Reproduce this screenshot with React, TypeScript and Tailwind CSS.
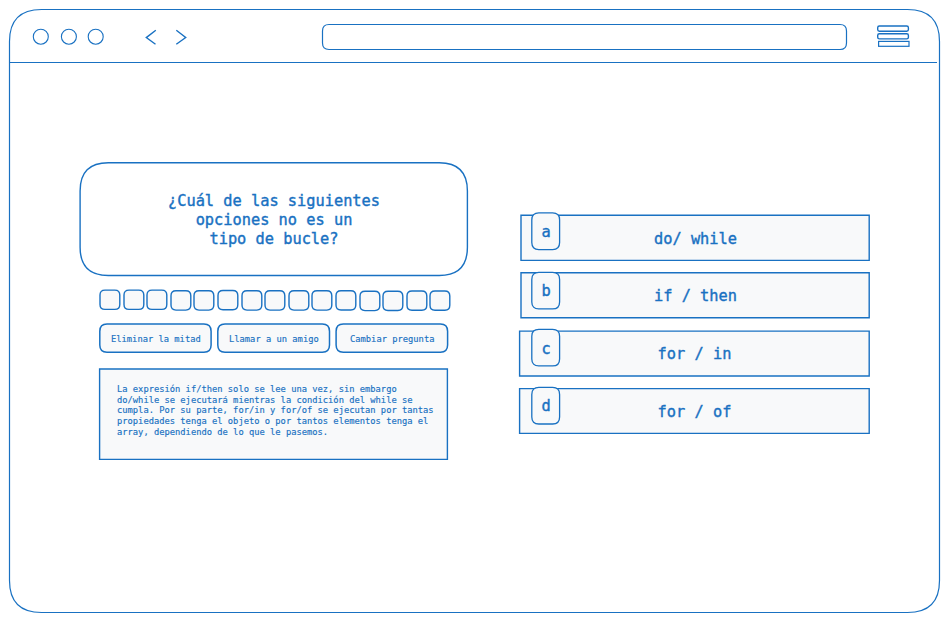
const INK = '#1971c2';

type OutlineProps = {
  x?: number;
  y?: number;
  w: number;
  h: number;
  r?: number;
  stroke?: number;
  fill?: string;
};

// Outline with quadratic corners; its coordinates are local to the box it decorates.
function Outline({ x = 0, y = 0, w, h, r = 0, stroke = 1.4, fill = 'none' }: OutlineProps) {
  const d = r
    ? `M${x + r} ${y}H${x + w - r}Q${x + w} ${y} ${x + w} ${y + r}V${y + h - r}Q${x + w} ${y + h} ${x + w - r} ${y + h}H${x + r}Q${x} ${y + h} ${x} ${y + h - r}V${y + r}Q${x} ${y} ${x + r} ${y}Z`
    : `M${x} ${y}h${w}v${h}h${-w}Z`;
  return (
    <svg className="pointer-events-none absolute inset-0 h-full w-full overflow-visible" aria-hidden="true">
      <path d={d} fill={fill} stroke={INK} strokeWidth={stroke} />
    </svg>
  );
}

const PAPER = '#f8f9fa';

const squares = [0, 0, 0, 0.7, 0.7, 0.4, 0.7, 0.7, 0.7, 0.7, 0.6, 1.2, 1.1, 0.9, 0.9];

const lifelines = [
  { label: 'Eliminar la mitad', x: 0.8, w: 111.3, pad: 'pl-[12px]' },
  { label: 'Llamar a un amigo', x: 0.8, w: 111.7, pad: 'pl-[12px]' },
  { label: 'Cambiar pregunta', x: 1.1, w: 111.5, pad: 'pl-[15px]' },
];

const options = [
  { key: 'a', text: 'do/ while', x: 1, y: 0.2, w: 348.2, h: 45.2, by: -2.1, bh: 36.7, pos: 'pt-[15px] pl-[1px]', ky: 'pt-[8px]' },
  { key: 'b', text: 'if / then', x: 1, y: -0.2, w: 348.2, h: 44.9, by: -0.6, bh: 36.5, pos: 'pt-[14px] pl-[1px]', ky: 'pt-[9px]' },
  { key: 'c', text: 'for / in', x: -0.4, y: 0.1, w: 349.6, h: 44.9, by: -1.7, bh: 36.6, pos: 'pt-[14px] pr-[1px]', ky: 'pt-[9px]' },
  { key: 'd', text: 'for / of', x: -0.4, y: -0.4, w: 349.6, h: 44.8, by: -1.6, bh: 36.6, pos: 'pt-[14px] pr-[1px]', ky: 'pt-[8px]' },
];

function BrowserBar() {
  return (
    <header className="relative flex h-[63px] items-start">
      <svg className="ml-[30px] mt-[26px] h-[22px] w-[160px]" viewBox="30 26 160 22" fill="none" stroke={INK} strokeWidth="1.1">
        <circle cx="40.8" cy="36.7" r="7.5" />
        <circle cx="68.9" cy="36.7" r="7.5" />
        <circle cx="95.7" cy="36.7" r="7.5" />
        <path d="M155.8 30.3 146.3 37.6l9.2 6.7M176.3 30.3l9.4 7.2-9.4 6.8" strokeWidth="1.4" />
      </svg>
      <div className="relative ml-[132px] mt-[24px] h-[26px] w-[525px]">
        <Outline x={0.5} y={0.5} w={524} h={25} r={6.5} stroke={1.2} />
      </div>
      <svg className="ml-[29px] mt-[24px] h-[25px] w-[36px]" viewBox="876 24 36 25" fill="none" stroke={INK} strokeWidth="1.4">
        <rect x="877.7" y="26" width="30.7" height="5.2" rx="1.7" />
        <rect x="877.7" y="33.7" width="30.7" height="5.2" rx="1.7" />
        <rect x="878.6" y="41.4" width="30.4" height="4.9" strokeWidth="1.2" />
      </svg>
      <div className="absolute bottom-0 left-[10px] h-px w-[927px] bg-[#1971c2]" />
    </header>
  );
}

function QuestionPanel() {
  return (
    <section className="ml-[80px] mt-[99px] w-[388px]">
      <h1 className="relative h-[114px] pt-[30px] text-center text-[15.32px] leading-[19px] [-webkit-text-stroke:0.4px_#1971c2]">
        <Outline x={0.1} y={0.8} w={387.3} h={112.7} r={28.2} />
        ¿Cuál de las siguientes
        <br />
        opciones no es un
        <br />
        tipo de bucle?
      </h1>
      <div className="ml-[19px] mt-[13px] flex h-[23px] gap-[3.6px]">
        {squares.map((dy, i) => (
          <div key={i} className="relative h-[20px] w-[20px] shrink-0">
            <Outline x={1} y={1.1 + dy} w={19.8} h={19.3} r={5} fill={PAPER} />
          </div>
        ))}
      </div>
      <div className="ml-[19px] mt-[11px] flex h-[30px] gap-[6px]">
        {lifelines.map((item) => (
          <button
            key={item.label}
            type="button"
            className={`relative h-[30px] w-[112px] shrink-0 whitespace-nowrap pt-[1px] text-left text-[8.78px] leading-[30px] [-webkit-text-stroke:0.15px_#1971c2] ${item.pad}`}
          >
            <Outline x={item.x} y={1} w={item.w} h={28.2} r={7.2} fill={PAPER} stroke={1.5} />
            <span className="relative">{item.label}</span>
          </button>
        ))}
      </div>
      <div className="relative ml-[19px] mt-[15px] h-[92px] w-[349px] whitespace-nowrap pl-[18px] pt-[16px] text-[8.78px] leading-[10.7px] [-webkit-text-stroke:0.15px_#1971c2]">
        <Outline x={0.6} y={1} w={347.8} h={90.4} fill={PAPER} />
        <p className="relative">
          La expresión if/then solo se lee una vez, sin embargo
          <br />
          do/while se ejecutará mientras la condición del while se
          <br />
          cumpla. Por su parte, for/in y for/of se ejecutan por tantas
          <br />
          propiedades tenga el objeto o por tantos elementos tenga el
          <br />
          array, dependiendo de lo que le pasemos.
        </p>
      </div>
    </section>
  );
}

function OptionList() {
  return (
    <section className="ml-[52px] mt-[152px] flex w-[350px] flex-col gap-[12px]">
      {options.map((o) => (
        <div key={o.key} className="relative h-[46px] text-center text-[15.32px] leading-[18px] [-webkit-text-stroke:0.4px_#1971c2]">
          <Outline x={o.x} y={o.y} w={o.w} h={o.h} fill={PAPER} />
          <span className={`relative block ${o.pos}`}>{o.text}</span>
          <span className={`absolute left-[11px] top-0 h-[36px] w-[30px] ${o.ky}`}>
            <Outline x={0.8} y={o.by} w={27.8} h={o.bh} r={7} stroke={1.3} fill={PAPER} />
            <span className="relative">{o.key}</span>
          </span>
        </div>
      ))}
    </section>
  );
}

export default function App() {
  return (
    <div className="relative h-[623px] w-[950px] overflow-hidden bg-white font-['DejaVu_Sans_Mono',monospace] text-[#1971c2]">
      <Outline x={9.5} y={9.5} w={930} h={603} r={32} stroke={1.2} />
      <BrowserBar />
      <main className="flex items-start">
        <QuestionPanel />
        <OptionList />
      </main>
    </div>
  );
}
